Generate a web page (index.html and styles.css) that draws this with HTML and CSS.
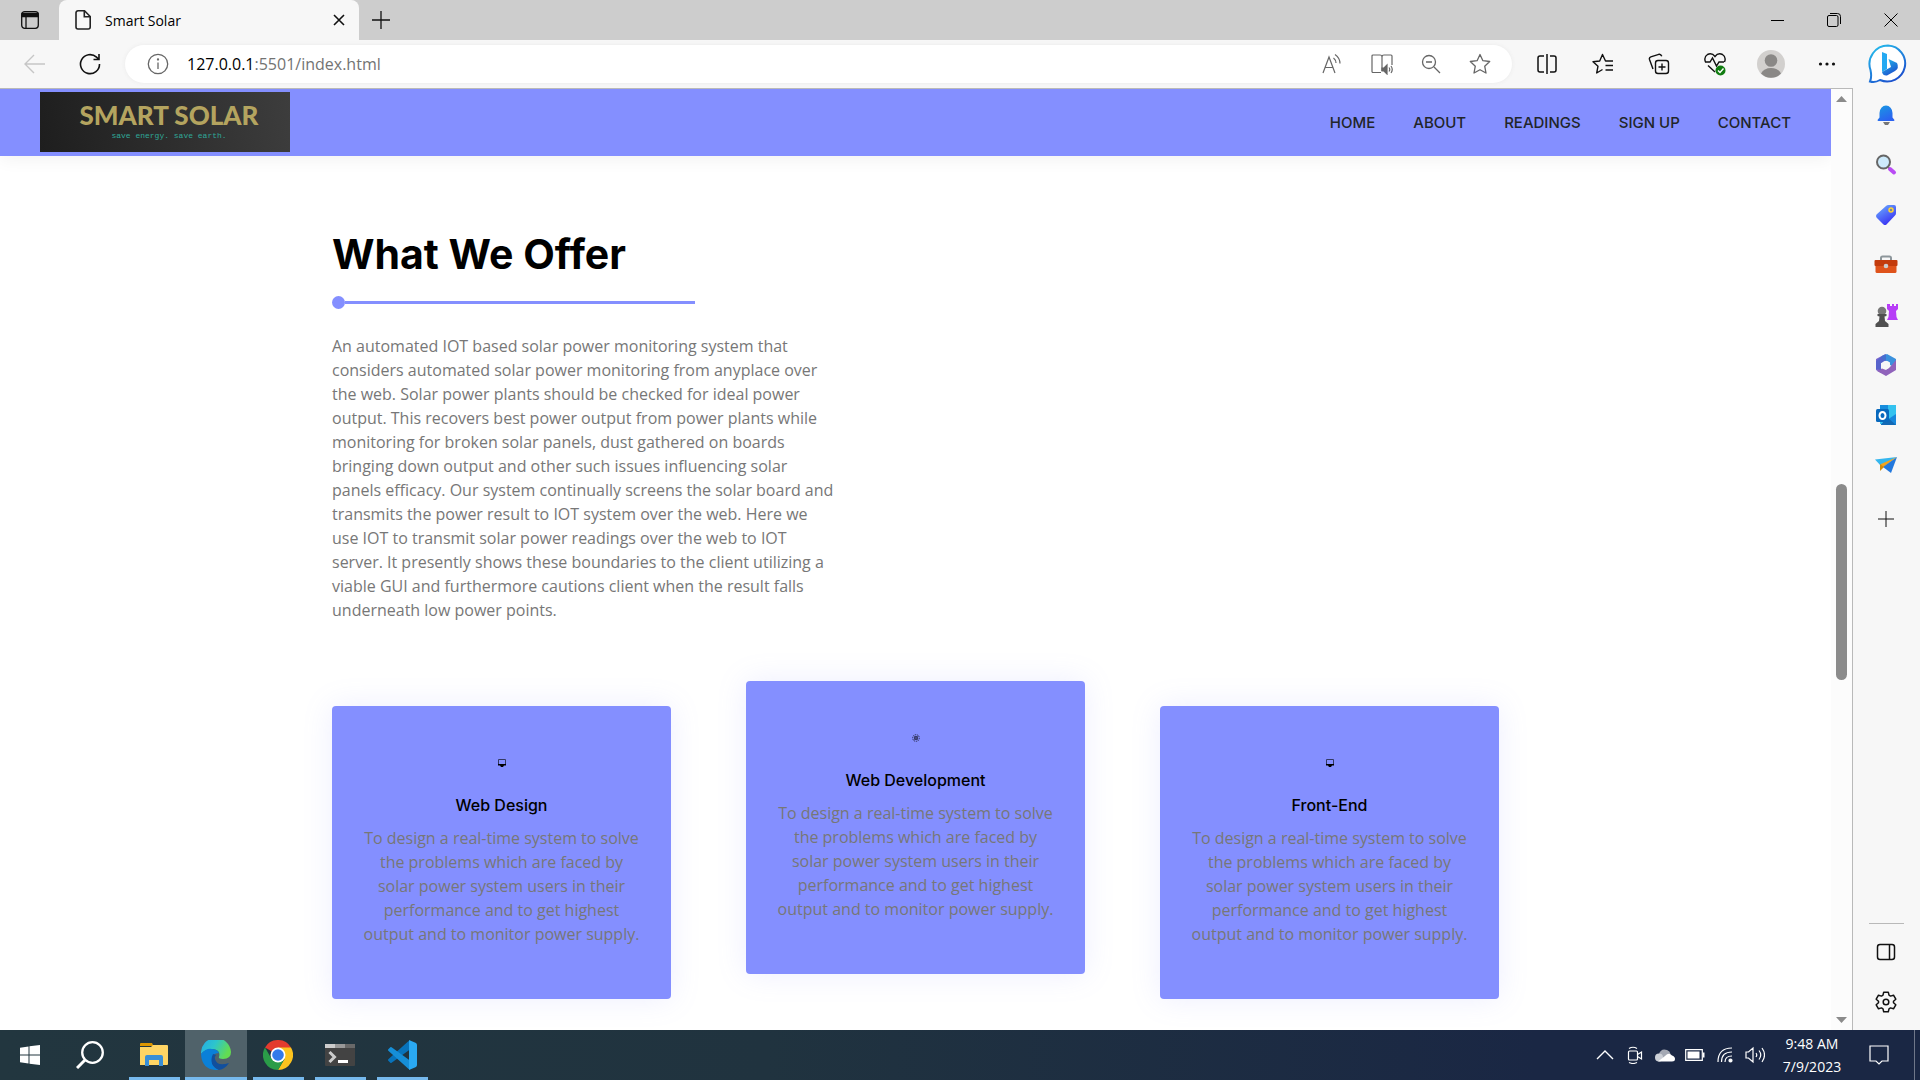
FILE: index.html
```html
<!DOCTYPE html>
<html lang="en">
<head>
<meta charset="utf-8">
<title>Smart Solar</title>
<link rel="stylesheet" href="styles.css">
</head>
<body>
<header class="tab-strip">
  <button class="workspaces" aria-label="Tab actions"><svg width="20" height="20" viewBox="0 0 20 20" fill="none" stroke="#111" stroke-width="1.3"><rect x="1.7" y="1.7" width="16.6" height="16.6" rx="3"/><path d="M2 3.5h16v3H2z" fill="#111"/><path d="M6 6v12"/></svg></button>
  <div class="tab">
    <svg width="18" height="22" viewBox="0 0 18 22" fill="none" stroke="#222" stroke-width="1.6"><path d="M4 1.8h6.5l5.7 5.7V18a2 2 0 0 1-2 2H4a2 2 0 0 1-2-2V3.800a2 2 0 0 1 2-2z"/><path d="M10.300 2v5.700H16"/></svg>
    <span class="tab-title">Smart Solar</span>
    <button aria-label="Close tab"><svg width="12" height="12" viewBox="0 0 12 12" stroke="#111" stroke-width="1.6"><path d="M1 1l10 10M11 1L1 11"/></svg></button>
  </div>
  <button class="new-tab" aria-label="New tab"><svg width="18" height="18" viewBox="0 0 18 18" stroke="#111" stroke-width="1.3"><path d="M9 0v18M0 9h18"/></svg></button>
  <div class="window-controls">
    <button aria-label="Minimize"><svg width="14" height="14" viewBox="0 0 14 14" stroke="#000"><path d="M1 7.500h13"/></svg></button>
    <button aria-label="Restore"><svg width="14" height="14" viewBox="0 0 14 14" fill="none" stroke="#000"><rect x=".5" y="2.500" width="10.500" height="11" rx="1.500"/><path d="M3 .500h7.500a3 3 0 0 1 3 3V11"/></svg></button>
    <button aria-label="Close"><svg width="14" height="14" viewBox="0 0 14 14" stroke="#000"><path d="M.500.500l13 13M13.500.500l-13 13"/></svg></button>
  </div>
</header>

<div class="toolbar">
  <button class="tool back" aria-label="Back"><svg width="22" height="20" viewBox="0 0 22 20" fill="none" stroke="#c6c6c6" stroke-width="1.400"><path d="M10 1L1 10l9 9M1 10h20"/></svg></button>
  <button class="tool" aria-label="Refresh"><svg width="22" height="22" viewBox="0 0 22 22" fill="none" stroke="#111" stroke-width="1.600"><path d="M20.500 11A9.500 9.500 0 1 1 17.500 4.200L20 6.500M20 1v5.500h-5.500"/></svg></button>
  <div class="address">
    <svg width="22" height="22" viewBox="0 0 22 22" fill="none" stroke="#666" stroke-width="1.300"><circle cx="11" cy="11" r="9.700"/><path d="M11 9.500V16"/><circle cx="11" cy="6.500" r=".500"/></svg>
    <span class="url">127.0.0.1<span class="path">:5501/index.html</span></span>
    <div class="address-tools">
      <button aria-label="Read aloud"><svg width="22" height="22" viewBox="0 0 22 22" fill="none" stroke="#666" stroke-width="1.200"><path d="M2 20L8 4l6 16M4.200 14.500h7.500M12.500 5q2.500 2 2.500 5M14 1.500q5 3.500 5 9"/></svg></button>
      <button aria-label="Immersive reader"><svg width="22" height="22" viewBox="0 0 22 22" fill="none" stroke="#666" stroke-width="1.200"><path d="M10 19.500H2a1 1 0 0 1-1-1V3a1 1 0 0 1 1-1h7q2 0 2 2v14M11 4q0-2 2-2h7a1 1 0 0 1 1 1v9"/><path d="M11 15h2l3-3v9l-3-3h-2z" fill="#666"/><path d="M18 14.500q1.500 2 0 4M20 13q2.500 3.500 0 7"/></svg></button>
      <button aria-label="Zoom out"><svg width="20" height="20" viewBox="0 0 20 20" fill="none" stroke="#666" stroke-width="1.300"><circle cx="8" cy="8" r="6.500"/><path d="M5 8h6M13 13l6 6"/></svg></button>
      <button aria-label="Add to favorites"><svg width="22" height="22" viewBox="0 0 22 22" fill="none" stroke="#666" stroke-width="1.300" stroke-linejoin="round"><path d="M11 1.500l2.900 6.200 6.800.800-5 4.700 1.300 6.800-6-3.300-6 3.300 1.300-6.800-5-4.700 6.800-.800z"/></svg></button>
    </div>
  </div>
  <div class="browser-tools">
    <button aria-label="Split screen"><svg width="22" height="22" viewBox="0 0 22 22" fill="none" stroke="#111" stroke-width="1.500"><path d="M8 3H4a2 2 0 0 0-2 2v12a2 2 0 0 0 2 2h4M14 3h4a2 2 0 0 1 2 2v12a2 2 0 0 1-2 2h-4M11 1v20"/></svg></button>
    <button aria-label="Favorites"><svg width="22" height="22" viewBox="0 0 22 22" fill="none" stroke="#111" stroke-width="1.400" stroke-linejoin="round"><path d="M21 8h-7.500L10.500 1.500 7.700 8l-6.700.700 5 4.500-1.300 6.800 5.800-3.500M13.500 12.500H21M13.500 17H21"/></svg></button>
    <button aria-label="Collections"><svg width="22" height="22" viewBox="0 0 22 22" fill="none" stroke="#111" stroke-width="1.400"><rect x="7.500" y="7.500" width="13" height="13" rx="2.500"/><path d="M14 10.500v7M10.500 14h7M5 16L1.500 6.500q-.600-2 1.300-2.700l8-2.500q2-.500 3 2"/></svg></button>
    <button aria-label="Browser essentials"><svg width="22" height="24" viewBox="0 0 22 24" fill="none" stroke="#111" stroke-width="1.400"><path d="M1.500 10Q-.500 5 3.500 2.500 8 .500 11 4.500 14 .500 18.500 2.500 22.500 5 20.500 10M1 10h5l2.500-4 4 8 2.500-4h5M4 13.500l7 6.500"/><circle cx="16.500" cy="18.500" r="5" fill="#107c10" stroke="none"/><path d="M14 18.500l2 2 3.500-4" stroke="#fff"/></svg></button>
    <button aria-label="Profile"><svg width="28" height="28" viewBox="0 0 28 28"><circle cx="14" cy="14" r="14" fill="#d2d0ce"/><circle cx="14" cy="10.500" r="6.300" fill="#8a8886"/><path d="M4 23.500Q7 18 14 18t10 5.500A14 14 0 0 1 4 23.500" fill="#8a8886"/></svg></button>
    <button aria-label="Settings and more"><svg width="18" height="6" viewBox="0 0 18 6" fill="#111"><circle cx="2.500" cy="3" r="1.600"/><circle cx="9" cy="3" r="1.600"/><circle cx="15.500" cy="3" r="1.600"/></svg></button>
  </div>
  <button class="bing" aria-label="Bing chat"><svg width="40" height="40" viewBox="0 0 40 40"><defs><linearGradient id="bing" x1="0" y1="0" x2=".6" y2="1"><stop stop-color="#25c3ee"/><stop offset="1" stop-color="#1b52ce"/></linearGradient></defs><path d="M20 1.500A18 18 0 1 1 12 36Q7 39 2 37.500 4 33 2.500 26A18.500 18.500 0 0 1 20 1.500z" fill="#fff" stroke="url(#bing)" stroke-width="2"/><path d="M14 8l5 2v15l-5 3z" fill="#23a9f2"/><path d="M20.500 15l8.500 4q2.500 5-2 8l-8 4.500q-4 .500-5-3.500l9-5z" fill="url(#bing)"/></svg></button>
</div>

<div class="workspace">
  <div class="viewport">
    <nav class="site-nav">
      <a class="logo" href="#home"><span class="logo-name">SMART SOLAR</span><span class="logo-tag">save energy. save earth.</span></a>
      <ul class="menu">
        <li><a href="#home">HOME</a></li>
        <li><a href="#about">ABOUT</a></li>
        <li><a href="#readings">READINGS</a></li>
        <li><a href="#signup">SIGN UP</a></li>
        <li><a href="#contact">CONTACT</a></li>
      </ul>
    </nav>
    <main class="offer">
      <h1>What We Offer</h1>
      <div class="rule"></div>
      <p class="intro">An automated IOT based solar power monitoring system that<br>considers automated solar power monitoring from anyplace over<br>the web. Solar power plants should be checked for ideal power<br>output. This recovers best power output from power plants while<br>monitoring for broken solar panels, dust gathered on boards<br>bringing down output and other such issues influencing solar<br>panels efficacy. Our system continually screens the solar board and<br>transmits the power result to IOT system over the web. Here we<br>use IOT to transmit solar power readings over the web to IOT<br>server. It presently shows these boundaries to the client utilizing a<br>viable GUI and furthermore cautions client when the result falls<br>underneath low power points.</p>
      <div class="cards">
        <article class="card">
          <svg width="8" height="8" viewBox="0 0 8 8"><path d="M.500.500h7v5h-7z" fill="none" stroke="#333963"/><path d="M0 5h8v1.500H6L5 8H3L2 6.500H0z" fill="#000"/></svg>
          <h2>Web Design</h2>
          <p>To design a real-time system to solve<br>the problems which are faced by<br>solar power system users in their<br>performance and to get highest<br>output and to monitor power supply.</p>
        </article>
        <article class="card raised">
          <svg width="8" height="8" viewBox="0 0 8 8" fill="none" stroke="#2c2f55"><circle cx="4" cy="4" r="3.300" stroke-dasharray="1.200 .800"/><circle cx="4" cy="4" r="1.500"/><path d="M1.500 1.500l5 5M6.500 1.500l-5 5" stroke-width=".600"/></svg>
          <h2>Web Development</h2>
          <p>To design a real-time system to solve<br>the problems which are faced by<br>solar power system users in their<br>performance and to get highest<br>output and to monitor power supply.</p>
        </article>
        <article class="card">
          <svg width="8" height="8" viewBox="0 0 8 8"><path d="M.500.500h7v5h-7z" fill="none" stroke="#333963"/><path d="M0 5h8v1.500H6L5 8H3L2 6.500H0z" fill="#000"/></svg>
          <h2>Front-End</h2>
          <p>To design a real-time system to solve<br>the problems which are faced by<br>solar power system users in their<br>performance and to get highest<br>output and to monitor power supply.</p>
        </article>
      </div>
    </main>
  </div>
  <div class="scrollbar">
    <svg width="11" height="20" viewBox="0 0 11 20"><path d="M0 13l5.500-6 5.500 6z" fill="#8b8b8b"/></svg>
    <div class="track"><div class="thumb"></div></div>
    <svg width="11" height="20" viewBox="0 0 11 20"><path d="M0 7l5.500 6L11 7z" fill="#8b8b8b"/></svg>
  </div>
  <aside class="sidebar">
    <button aria-label="Notifications"><svg width="22" height="22" viewBox="0 0 22 22"><defs><linearGradient id="bell" x2=".5" y2="1"><stop stop-color="#199be2"/><stop offset="1" stop-color="#2b62f0"/></linearGradient></defs><path d="M8 18h7l-2 3h-3z" fill="#777"/><path d="M4.500 9a6.500 7.500 0 0 1 13 0v4.500l2 2.500q0 1-1 1h-15q-1 0-1-1l2-2.500z" fill="url(#bell)"/></svg></button>
    <button aria-label="Search"><svg width="22" height="22" viewBox="0 0 22 22"><path d="M12.500 12.500l3 3" stroke="#888" stroke-width="2"/><path d="M15 15l4 3.500" stroke="#b94cf4" stroke-width="4" stroke-linecap="round"/><circle cx="8.500" cy="8" r="6.500" fill="#cdeafb" stroke="#666" stroke-width="2"/></svg></button>
    <button aria-label="Shopping"><svg width="22" height="22" viewBox="0 0 22 22"><defs><linearGradient id="tag" x2=".6" y2="1"><stop stop-color="#6db5ff"/><stop offset="1" stop-color="#3a31f3"/></linearGradient></defs><path d="M11 2q1-1 2.500-1H19q2 0 2 2v6q0 1.500-1 2.500l-8.500 9q-1.500 1-3 0l-7-7q-1-1.500 0-3z" fill="url(#tag)"/><circle cx="16" cy="6" r="2" fill="#789" stroke="#ffd335" stroke-width="1.500"/></svg></button>
    <button aria-label="Tools"><svg width="24" height="22" viewBox="0 0 24 22"><path d="M7 7V4q0-1.500 1.500-1.500h7Q17 2.500 17 4v3" fill="none" stroke="#8d969b" stroke-width="2"/><rect x="1.500" y="10" width="21" height="9" rx="1.500" fill="#df531b"/><rect x=".500" y="6" width="23" height="6" rx="1" fill="#c33b0c"/><circle cx="12" cy="12" r="2.300" fill="#ccc"/></svg></button>
    <button aria-label="Games"><svg width="24" height="24" viewBox="0 0 24 24"><path d="M14 1h2v2h2V1h2v2h2V1h2v5l-2 2 .500 6 1.500 3h-11l1.500-3 .500-6-2-2V1z" fill="#b73df7"/><circle cx="8" cy="8" r="4.300" fill="#777"/><path d="M3.500 11h9v2l-2 .500.500 4.500 3.500 3v3h-13v-3L5 18l.500-4.500-2-.500z" fill="#505050"/></svg></button>
    <button aria-label="Microsoft 365"><svg width="24" height="24" viewBox="0 0 24 24"><path d="M11.500 1L2 6v11l5 3V10l5-3z" fill="#7b68cf"/><path d="M8 3l5-2 9 5v9l-6-3V9.500L8 6z" fill="#3b91dd"/><path d="M22 7v10l-10 6-9-5 5-2.500 4 1.500 5-4z" fill="#9063bb"/><path d="M8 3l4-2v7L7 10v7l-5-1V8z" fill="#4a63cb" opacity=".7"/><circle cx="12" cy="12" r="4" fill="#f7f7f7"/></svg></button>
    <button aria-label="Outlook"><svg width="22" height="22" viewBox="0 0 22 22"><path d="M5 1h16v19H5z" fill="#34c2ef"/><path d="M5 1h8v6H5z" fill="#178ddd"/><path d="M6 20L21 10v11H6z" fill="#1687dc"/><path d="M12 13l9 8H6z" fill="#1269b5"/><rect x="1" y="5" width="13" height="13" rx="1.500" fill="#0869bd"/><ellipse cx="7.500" cy="11.500" rx="3" ry="3.500" fill="none" stroke="#fff" stroke-width="2"/></svg></button>
    <button aria-label="Drop"><svg width="22" height="20" viewBox="0 0 22 20"><path d="M0 4.500L22 2 6 11z" fill="#35b6ee"/><path d="M22 2L6 9v5z" fill="#f3a41c"/><path d="M22 2L8 12l8 6z" fill="#2278dd"/><path d="M5 9v7l4-4z" fill="#d28a0b"/></svg></button>
    <button class="add" aria-label="Customize"><svg width="16" height="16" viewBox="0 0 16 16" stroke="#111"><path d="M8 0v16M0 8h16"/></svg></button>
    <div class="sidebar-bottom">
      <button aria-label="Toggle sidebar"><svg width="20" height="18" viewBox="0 0 20 18" fill="none" stroke="#111" stroke-width="1.500"><rect x="1.500" y="1.500" width="17" height="15" rx="2.500"/><path d="M13.500 2v14"/></svg></button>
      <button aria-label="Settings"><svg width="22" height="22" viewBox="0 0 22 22" fill="none" stroke="#111" stroke-width="1.500" stroke-linejoin="round"><path d="M8.700 1.200h4.600l.700 3 1.500.900 3-.900 2.300 4-2.300 2v1.600l2.300 2-2.300 4-3-.900-1.500.900-.700 3H8.700l-.700-3-1.500-.900-3 .900-2.300-4 2.300-2v-1.600l-2.300-2 2.300-4 3 .900 1.500-.900z"/><circle cx="11" cy="11" r="2.800"/></svg></button>
    </div>
  </aside>
</div>

<footer class="taskbar">
  <button class="start" aria-label="Start"><svg width="20" height="20" viewBox="0 0 20 20" fill="#fff"><path d="M0 2.700l8.500-1.200v8H0zM9.500 1.300L20 0v9.500H9.500zM0 10.500h8.500v8L0 17.300zM9.500 10.500H20V20L9.500 18.700z"/></svg></button>
  <button class="start" aria-label="Search Windows"><svg width="28" height="28" viewBox="0 0 28 28" fill="none" stroke="#fff" stroke-width="2.300"><circle cx="16.500" cy="11.500" r="10.300"/><path d="M9 19l-8 8" stroke-width="3"/></svg></button>
  <div class="apps">
    <button class="app" aria-label="File Explorer"><svg width="28" height="24" viewBox="0 0 28 24"><path d="M0 1q0-1 1-1h11l1.500 3H0z" fill="#dc9600"/><path d="M0 4h11l2-2h14q1 0 1 1v18q0 1-1 1H0z" fill="#ffd564"/><path d="M5 23V14q0-2 2-2h14q2 0 2 2v9h-4v-6H9v6z" fill="#3a8fd6"/></svg></button>
    <button class="app active" aria-label="Microsoft Edge"><svg width="30" height="30" viewBox="0 0 30 30"><defs><linearGradient id="edge" x2="1" y2=".4"><stop stop-color="#23a9e8"/><stop offset=".5" stop-color="#2dc5cc"/><stop offset="1" stop-color="#63dc51"/></linearGradient></defs><path d="M0 14A15 15 0 0 1 30 12q0 7-8 7-5 0-4-2 2-7-6-8-8 0-12 5z" fill="url(#edge)"/><path d="M0 14Q5 8 11 9q5 0 7 4-7 0-7 6 0 8 7 11Q1 31 0 14z" fill="#0a80d8"/><path d="M12 14q-5 11 6 16 6-1 10-7-12 4-14-4-1-2 1-4z" fill="#114f9d"/></svg></button>
    <button class="app" aria-label="Google Chrome"><svg width="30" height="30" viewBox="0 0 30 30"><path d="M15 15L2 7.500A15 15 0 0 1 28 7.500z" fill="#e33b2e"/><path d="M15 15V7.500h13A15 15 0 0 1 15 30l6.500-11z" fill="#fcc31e"/><path d="M2 7.500A15 15 0 0 0 15 30l6.500-11.200L15 15 8.500 18.700z" fill="#2a9c48"/><circle cx="15" cy="15" r="7.500" fill="#fff"/><circle cx="15" cy="15" r="5.800" fill="#3379ea"/></svg></button>
    <button class="app" aria-label="Terminal"><svg width="30" height="22" viewBox="0 0 30 22"><rect width="30" height="22" rx="1" fill="#434343"/><path d="M0 0h10v4H0z" fill="#ccc"/><path d="M10 0h10v4H10z" fill="#999"/><path d="M20 0h10v4H20z" fill="#696969"/><path d="M4.500 8l5 5-5 5" fill="none" stroke="#ccc" stroke-width="3"/><path d="M13 16h10v3H13z" fill="#fff"/></svg></button>
    <button class="app" aria-label="Visual Studio Code"><svg width="30" height="30" viewBox="0 0 30 30"><path d="M2 20L22 2v7L4 22z" fill="#0873bb" stroke="#0873bb" stroke-linejoin="round" stroke-width="2"/><path d="M2 10l2-2 18 13v7z" fill="#168fd8" stroke="#168fd8" stroke-linejoin="round" stroke-width="2"/><path d="M22 0l7 3q1 1 1 2v20q0 1-1 2l-7 3z" fill="#2aa9f3"/></svg></button>
  </div>
  <div class="tray">
    <button aria-label="Show hidden icons"><svg width="18" height="18" viewBox="0 0 18 18" fill="none" stroke="#fff" stroke-width="1.400"><path d="M1 13l8-8 8 8"/></svg></button>
    <button aria-label="Meet now"><svg width="16" height="18" viewBox="0 0 16 18" fill="none" stroke="#fff" stroke-width="1.200"><rect x="1.500" y="5" width="9" height="9" rx="1"/><path d="M10.500 8.500l4-2.500v7l-4-2.500M2 2.500Q6 0 10 2.500M2 16.500q4 2 8 0"/></svg></button>
    <button aria-label="OneDrive"><svg width="20" height="14" viewBox="0 0 20 14"><path d="M4 6q2-6 8-4 3 1 3.500 4l-6 5L4 9z" fill="#a4a9b4"/><circle cx="4" cy="9.500" r="4" fill="#ccd0d7"/><path d="M3 13.500l7-5.500q4-4 7-.500 3 1 3 3.500 0 2.500-3 2.500z" fill="#fff"/></svg></button>
    <button aria-label="Battery"><svg width="20" height="12" viewBox="0 0 20 12" fill="#fff"><path d="M.700.700h16.600v10.600H.700z" fill="none" stroke="#fff" stroke-width="1.200"/><path d="M2.500 2.500h12v7h-12zM18 3.500h1.500v5H18z"/></svg></button>
    <button aria-label="Network"><svg width="16" height="16" viewBox="0 0 16 16" fill="none" stroke="#fff" stroke-width="1.200"><path d="M1 15Q1 1 15 1M4.500 15q0-10 10.500-10M8 15q0-6 7-6"/><circle cx="13.500" cy="13.500" r="1.500" fill="#fff"/></svg></button>
    <button aria-label="Volume"><svg width="20" height="18" viewBox="0 0 20 18" fill="none" stroke="#fff" stroke-width="1.200"><path d="M1 6h2.500L8 2v14l-4.500-4H1zM11 7q1.500 2 0 4M14 4.500q3.500 4.500 0 9M17 2q5 7 0 14"/></svg></button>
    <button class="clock"><span>9:48 AM</span><span>7/9/2023</span></button>
    <button class="action-center" aria-label="Notifications"><svg width="20" height="20" viewBox="0 0 20 20" fill="none" stroke="#fff" stroke-width="1.200"><path d="M1 1h18v15h-6l-3 3-3-3H1z"/></svg></button>
  </div>
</footer>
</body>
</html>
```
FILE: styles.css
```css
* {
  box-sizing: border-box;
}

body {
  display: flex;
  flex-direction: column;
  height: 100vh;
  margin: 0;
  overflow: hidden;
  background: #f7f7f7;
  font-family: "Open Sans", "Noto Sans", sans-serif;
}

button {
  display: flex;
  align-items: center;
  justify-content: center;
  flex: none;
  padding: 0;
  border: 0;
  background: none;
  color: inherit;
  font: inherit;
}

svg {
  display: block;
  flex: none;
}

/* Browser tabs */
.tab-strip {
  display: flex;
  flex: none;
  height: 40px;
  background: #cdcdcd;
}

.workspaces {
  width: 59px;
}

.tab {
  display: flex;
  align-items: center;
  gap: 13px;
  width: 300px;
  padding: 0 14px 0 15px;
  border-radius: 8px 8px 0 0;
  background: #f7f7f7;
}

.tab-title {
  flex: 1;
  font-size: 14px;
}

.new-tab {
  width: 43px;
}

.window-controls {
  display: flex;
  margin-left: auto;
  padding-right: 1px;
}

.window-controls button {
  width: 57px;
}

/* Address bar */
.toolbar {
  display: flex;
  align-items: center;
  flex: none;
  height: 48px;
}

.tool {
  width: 55px;
}

.back {
  width: 70px;
}

.tool + .tool {
  padding-right: 16px;
}

.address {
  display: flex;
  align-items: center;
  flex: 1;
  height: 38px;
  padding: 0 21px 0 22px;
  border-radius: 19px;
  background: #fff;
  box-shadow: 0 0 4px #eaeaea;
}

.url {
  margin-left: 18px;
  font-size: 16px;
}

.path {
  color: #737373;
}

.address-tools {
  display: flex;
  gap: 28px;
  margin-left: auto;
}

.browser-tools {
  display: flex;
  margin-left: 7px;
}

.browser-tools button {
  width: 56px;
}

.bing {
  width: 65px;
}

/* Web page area */
.workspace {
  display: flex;
  flex: 1;
  min-height: 0;
}

.viewport {
  flex: 1;
  min-width: 0;
  overflow: hidden;
  border-top: 1px solid #b9b9b9;
  background: #fff;
}

.site-nav {
  display: flex;
  align-items: center;
  justify-content: space-between;
  height: 67px;
  padding: 0 40px 2px;
  background: #848fff;
  box-shadow: 0 4px 16px #0000000d;
}

.logo {
  display: flex;
  flex-direction: column;
  align-items: center;
  width: 250px;
  height: 60px;
  padding: 7px 0 0 8px;
  background: linear-gradient(80deg, #1e1e1e, #3d3d3d);
  color: #b4a45f;
  text-decoration: none;
}

.logo-name {
  font-family: Lato, sans-serif;
  font-size: 26px;
  font-weight: 900;
  line-height: 32px;
}

.logo-tag {
  color: #2fa898;
  font-family: "Liberation Mono", monospace;
  font-size: 8px;
  line-height: 9px;
}

.menu {
  display: flex;
  gap: 38px;
  margin: 0;
  padding: 0;
  list-style: none;
}

.menu a {
  color: #212529;
  font-family: Inter, sans-serif;
  font-size: 15px;
  font-weight: 500;
  text-decoration: none;
}

.offer {
  max-width: 1167px;
  margin: 0 auto;
  padding-top: 70px;
}

.offer h1 {
  margin: 0;
  font-family: Inter, sans-serif;
  font-size: 41px;
  font-weight: 700;
  line-height: 56px;
}

.rule {
  display: flex;
  align-items: center;
  width: 363px;
  margin: 14px 0 25px;
}

.rule::before {
  content: "";
  width: 13px;
  height: 13px;
  border-radius: 50%;
  background: #848fff;
}

.rule::after {
  content: "";
  flex: 1;
  height: 3px;
  background: #848fff;
}

.intro,
.card p {
  margin: 0;
  color: #777;
  font-family: "Open Sans", sans-serif;
  font-size: 16px;
  line-height: 24px;
  white-space: nowrap;
}

.cards {
  display: grid;
  grid-template-columns: repeat(3, 1fr);
  align-items: start;
  gap: 75px;
  margin-top: 59px;
}

.card {
  display: flex;
  flex-direction: column;
  align-items: center;
  margin-top: 25px;
  padding: 53px 16px;
  border-radius: 4px;
  background: #848fff;
  box-shadow: 0 0 30px #848fff26;
  text-align: center;
}

.raised {
  margin-top: 0;
}

.card h2 {
  margin: 26px 0 9px;
  font-family: Inter, sans-serif;
  font-size: 16px;
  font-weight: 500;
  line-height: 24px;
}

/* Scrollbar */
.scrollbar {
  display: flex;
  flex-direction: column;
  align-items: center;
  width: 22px;
  border-top: 1px solid #b9b9b9;
  border-right: 1px solid #b9b9b9;
  background: #fcfcfc;
}

.track {
  flex: 1;
  padding-top: 375px;
}

.thumb {
  width: 11px;
  height: 196px;
  border-radius: 6px;
  background: #8b8b8b;
}

/* Browser sidebar */
.sidebar {
  display: flex;
  flex-direction: column;
  align-items: center;
  width: 67px;
  padding: 2px 1px 0 0;
}

.sidebar button {
  width: 50px;
  height: 50px;
}

.sidebar .add {
  margin-top: 4px;
}

.sidebar-bottom {
  width: 35px;
  margin-top: auto;
  padding: 3px 0;
  border-top: 1px solid #b9b9b9;
}

.sidebar-bottom button {
  width: 35px;
}

/* Taskbar */
.taskbar {
  display: flex;
  flex: none;
  height: 50px;
  padding-right: 5px;
  background: linear-gradient(90deg, #22363f, #20333f 40%, #1a2744 80%);
  color: #fff;
}

.start {
  width: 60px;
}

.apps {
  display: flex;
  margin-left: 3px;
}

.app {
  width: 62px;
  background: linear-gradient(#76b9ed, #76b9ed) bottom / 51px 3px no-repeat;
}

.app.active {
  background: linear-gradient(#76b9ed, #76b9ed) bottom / 62px 3px no-repeat #50626a;
}

.tray {
  display: flex;
  margin-left: auto;
  border-right: 1px solid #6f7789;
}

.tray button {
  width: 30px;
}

.tray .clock {
  flex-direction: column;
  width: 84px;
  font-size: 14px;
  line-height: 23px;
}

.tray .action-center {
  width: 60px;
  padding-right: 10px;
}
```
